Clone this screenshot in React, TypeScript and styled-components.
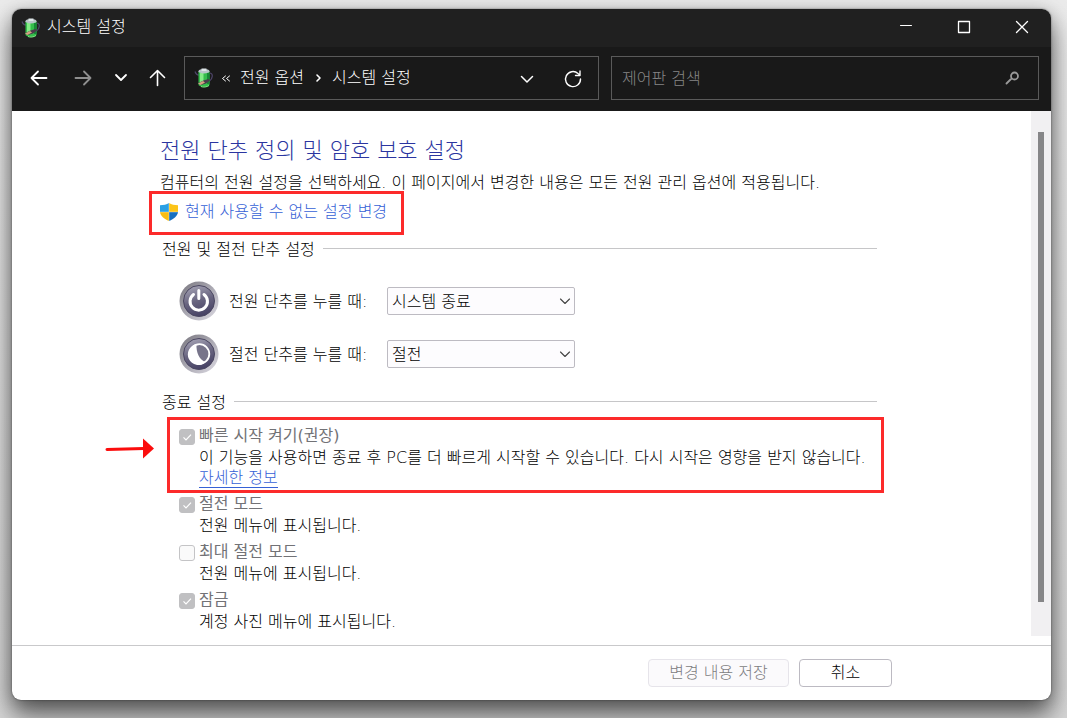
import React from "react";
import styled, { createGlobalStyle } from "styled-components";

const GlobalStyle = createGlobalStyle`
  * { box-sizing: border-box; }
  body {
    margin: 0;
    background: #dedede;
    color: #000;
    font: 300 16px/24px "DejaVu Sans", "Noto Sans CJK KR", sans-serif;
  }
  button, input, select { font: inherit; }
`;

const Desktop = styled.div`
  min-height: 100vh;
  padding: 9px 16px 18px 12px;
  display: flex;
  overflow: hidden;
  background: linear-gradient(#ebebeb, #d6d6d6);
`;

const Window = styled.div`
  flex: 1;
  min-width: 0;
  display: flex;
  flex-direction: column;
  background: #fff;
  border-radius: 9px;
  box-shadow: 0 0 2px rgba(0, 0, 0, 0.5), 0 4px 18px rgba(0, 0, 0, 0.28), 0 16px 26px rgba(0, 0, 0, 0.5);
`;

const TitleBar = styled.header`
  height: 38px;
  padding-left: 9px;
  display: flex;
  align-items: center;
  gap: 6px;
  background: #202020;
  color: #fff;
  border-radius: 9px 9px 0 0;
`;

const WindowTitle = styled.span`
  flex: 1;
  line-height: 36px;
  padding-bottom: 2px;
`;

const CaptionButtons = styled.div`
  align-self: flex-start;
  display: flex;
`;

const CaptionButton = styled.button`
  width: 58px;
  height: 36px;
  display: grid;
  place-items: center;
  border: 0;
  padding: 0;
  background: none;
  color: #fff;
`;

const Toolbar = styled.nav`
  height: 64px;
  padding: 0 12px 2px 5px;
  display: flex;
  align-items: center;
  background: #191919;
  color: #fff;
`;

const NavButton = styled.button<{ $width: number }>`
  width: ${(p) => p.$width}px;
  height: 42px;
  display: grid;
  place-items: center;
  border: 0;
  padding: 0;
  background: none;
  color: #fff;
  &:disabled { color: #8f8f8f; }
`;

const AddressBar = styled.div`
  flex: 81 1 0;
  min-width: 0;
  height: 44px;
  margin: 0 12px 0 7px;
  padding: 0 1px 0 9px;
  display: flex;
  align-items: center;
  border: 1px solid #5a5a5a;
`;

const Crumbs = styled.div`
  flex: 1;
  display: flex;
  align-items: center;
  gap: 8px;
  margin-left: 7px;
  white-space: nowrap;
`;

const Crumb = styled.a`
  color: #fff;
  text-decoration: none;
`;

const SearchBox = styled.label`
  flex: 80 1 0;
  min-width: 0;
  height: 44px;
  padding: 0 18px 0 10px;
  display: flex;
  align-items: center;
  border: 1px solid #5a5a5a;
  color: #9a9a9a;
`;

const SearchInput = styled.input`
  flex: 1;
  min-width: 0;
  padding: 2px 0 0;
  border: 0;
  outline: 0;
  background: none;
  color: #fff;
  &::placeholder { color: #868686; opacity: 1; }
`;

const Body = styled.div`
  flex: 1;
  display: flex;
`;

const Main = styled.main`
  flex: 1;
  min-width: 0;
  padding: 25px 154px 12px 148px;
`;

const ScrollTrack = styled.div`
  width: 20px;
  margin-bottom: 9px;
  padding: 21px 7px 34px;
  display: flex;
  background: #f1f0f2;
`;

const ScrollThumb = styled.div`
  flex: 1;
  background: #868688;
`;

const Heading = styled.h1`
  margin: 0;
  font-size: 22px;
  line-height: 30px;
  font-weight: 300;
  color: #2b35a0;
`;

const Intro = styled.p`
  margin: 5px 0;
  white-space: nowrap;
`;

const AdminLink = styled.a`
  position: relative;
  display: inline-flex;
  align-items: center;
  gap: 7px;
  vertical-align: top;
  color: #3661d6;
  text-decoration: none;
`;

const Marker = styled.span<{ $inset: string }>`
  position: absolute;
  inset: ${(p) => p.$inset};
  border: 3px solid #fc2a2a;
  pointer-events: none;
`;

const Pointer = styled.svg`
  position: absolute;
  left: -66px;
  top: 17px;
`;

const SectionTitle = styled.h2<{ $gap: number }>`
  margin: ${(p) => p.$gap}px 0 0 2px;
  display: flex;
  align-items: center;
  gap: 8px;
  font-size: 16px;
  line-height: 24px;
  font-weight: 300;
  &::after {
    content: "";
    flex: 1;
    height: 4px;
    border-top: 1px solid #c6c6c8;
  }
`;

const PowerRows = styled.div`
  margin: 19px 0 0 19px;
  display: grid;
  gap: 13px;
`;

const PowerRow = styled.div`
  display: grid;
  grid-template-columns: 50px 158px 188px;
  height: 40px;
  align-items: center;
`;

const PowerLabel = styled.label`
  padding-top: 2px;
`;

const SelectWrap = styled.div`
  display: grid;
  align-items: center;
  & > * { grid-area: 1 / 1; }
  & > svg { justify-self: end; margin-right: 3px; pointer-events: none; color: #444; }
`;

const Select = styled.select`
  appearance: none;
  width: 100%;
  height: 28px;
  padding: 2px 24px 0 4px;
  border: 1px solid #bdbbc2;
  border-radius: 2px;
  background: #fdfcfe;
  color: #000;
`;

const Options = styled.div`
  margin: 10px 0 0 19px;
  display: grid;
  gap: 4px;
  line-height: 22px;
`;

const Option = styled.div`
  position: relative;
  display: grid;
  grid-template-columns: 16px 1fr;
  column-gap: 4px;
`;

const CheckBox = styled.input`
  appearance: none;
  width: 16px;
  height: 16px;
  margin: 4px 0 0;
  border: 1px solid #c4c4c6;
  border-radius: 3px;
  background: #fafafa;
  &:checked {
    border-color: #c0c0c2;
    background: #c0c0c2
      url("data:image/svg+xml,%3Csvg xmlns='http://www.w3.org/2000/svg' viewBox='0 0 14 14'%3E%3Cpath d='M3.5 7.3 6 9.8l5-5.2' fill='none' stroke='white' stroke-width='1.2'/%3E%3C/svg%3E");
  }
`;

const OptionLabel = styled.label`
  font-weight: 400;
  color: #727276;
`;

const OptionText = styled.p`
  grid-column: 2;
  margin: 0;
  white-space: nowrap;
`;

const MoreLink = styled.a`
  grid-column: 2;
  justify-self: start;
  line-height: 18px;
  margin-bottom: 1px;
  border-bottom: 1px solid #3661d6;
  color: #3661d6;
  text-decoration: none;
`;

const Footer = styled.footer`
  padding: 13px 159px 13px 20px;
  display: flex;
  justify-content: flex-end;
  gap: 10px;
  border-top: 1px solid #c9c9cb;
`;

const ActionButton = styled.button<{ $width: number }>`
  width: ${(p) => p.$width}px;
  height: 28px;
  padding: 0;
  border: 1px solid #bcbac2;
  border-radius: 4px;
  background: #fff;
  color: #000;
  line-height: 24px;
  &:disabled {
    border-color: #e6e4ea;
    background: #fbfafc;
    color: #7d7d81;
  }
`;

const BatteryIcon = () => (
  <svg width="20" height="22" viewBox="0 0 20 22" aria-hidden="true">
    <path d="M1 4.500c1 3 2.500 3.500 4 3.500M16 6c3 .5 3.500 5-1 8.500" fill="none" stroke="#4d4468" strokeWidth="1.200" />
    <path d="M4.500 4.500h11v13c0 3-11 3-11 0z" fill="#35bd4c" />
    <path d="M6 6h3.500v11H6z" fill="#84ec87" />
    <path d="M13 6h2.500v11H13z" fill="#178a36" />
    <ellipse cx="10" cy="4.200" rx="5.500" ry="2.300" fill="#b9c4c8" />
    <path d="M7.500 1.500h5v2.500h-5z" fill="#dfe6e8" />
    <path d="m4.500 16 5-2.500 5-1.500 1.500 1.500-4 3-5 1.500z" fill="#4b3b4c" />
    <path d="m4 16.500 5-2.500 2 1.500-4.500 2.500z" fill="#d2a582" />
    <path d="M7 19.500c2 1 6 .6 8-1" stroke="#7ef483" fill="none" />
  </svg>
);

const ShieldIcon = () => (
  <svg width="18" height="20" viewBox="0 0 18 20" aria-hidden="true">
    <path d="M9 1C6.500 2.700 3.500 3.200 0 3.200V10h9z" fill="#2ba0e4" />
    <path d="M9 1c2.500 1.700 5.500 2.200 9 2.200V10H9z" fill="#fcc419" />
    <path d="M0 10c.5 4 4 7 9 9v-9z" fill="#f8bd13" />
    <path d="M18 10c-.5 4-4 7-9 9v-9z" fill="#176fc0" />
    <path d="M9 1v18M0 10h18" stroke="#fff" strokeWidth=".6" opacity=".6" />
  </svg>
);

const RoundIcon = ({ kind }: { kind: "power" | "sleep" }) => (
  <svg width="40" height="40" viewBox="0 0 40 40" aria-hidden="true">
    <defs>
      <linearGradient id={`ring-${kind}`} x1="0" y1="0" x2="1" y2="1">
        <stop offset="0" stopColor="#77757d" />
        <stop offset=".5" stopColor="#aaa8b2" />
        <stop offset="1" stopColor="#dedce4" />
      </linearGradient>
      <linearGradient id={`face-${kind}`} x1=".3" y1="0" x2=".6" y2="1">
        <stop offset="0" stopColor="#a3a1b3" />
        <stop offset=".5" stopColor="#68647f" />
        <stop offset="1" stopColor="#454063" />
      </linearGradient>
    </defs>
    <circle cx="20" cy="20" r="19.500" fill={`url(#ring-${kind})`} />
    <circle cx="20" cy="20" r="15.500" fill={`url(#face-${kind})`} stroke="#4b4761" />
    {kind === "power" ? (
      <path d="M14.500 13.500a8.700 8.700 0 1 0 10.500 0M19.800 9.500v8" fill="none" stroke="#fff" strokeWidth="3" strokeLinecap="round" />
    ) : (
      <>
        <circle cx="20.500" cy="20" r="9.800" fill="#77748a" stroke="#fff" strokeWidth="1.800" />
        <path d="M17.500 10C17 19 20.500 25.500 26.500 28.300A10.600 10.600 0 1 1 17.500 10z" fill="#fff" />
      </>
    )}
  </svg>
);

type StrokeProps = { d: string; size?: number; width?: number };
const StrokeIcon = ({ d, size = 20, width = 1.8 }: StrokeProps) => (
  <svg width={size} height={size} viewBox={`0 0 ${size} ${size}`} fill="none" stroke="currentColor" strokeWidth={width} strokeLinecap="round" strokeLinejoin="round" aria-hidden="true">
    <path d={d} />
  </svg>
);

const powerRows = [
  { id: "power", kind: "power" as const, label: "전원 단추를 누를 때:", value: "시스템 종료" },
  { id: "sleep", kind: "sleep" as const, label: "절전 단추를 누를 때:", value: "절전" },
];

const menuOptions = [
  { id: "sleep-mode", label: "절전 모드", text: "전원 메뉴에 표시됩니다.", checked: true },
  { id: "hibernate", label: "최대 절전 모드", text: "전원 메뉴에 표시됩니다.", checked: false },
  { id: "lock", label: "잠금", text: "계정 사진 메뉴에 표시됩니다.", checked: true },
];

export default function App() {
  return (
    <>
      <GlobalStyle />
      <Desktop>
        <Window>
          <TitleBar>
            <BatteryIcon />
            <WindowTitle>시스템 설정</WindowTitle>
            <CaptionButtons>
              <CaptionButton aria-label="최소화"><StrokeIcon d="M4.500 8.500h11" width={1} /></CaptionButton>
              <CaptionButton aria-label="최대화"><StrokeIcon d="M4.500 4.500h11v11h-11z" width={1.3} /></CaptionButton>
              <CaptionButton aria-label="닫기"><StrokeIcon d="m4.500 4.500 11 11m0-11-11 11" width={1.3} /></CaptionButton>
            </CaptionButtons>
          </TitleBar>
          <Toolbar>
            <NavButton $width={44} aria-label="뒤로"><StrokeIcon d="M17.500 10h-15m6.500-6.500-6.500 6.500 6.500 6.500" /></NavButton>
            <NavButton $width={44} aria-label="앞으로" disabled><StrokeIcon d="M2.500 10h15m-6.500-6.500 6.500 6.500-6.500 6.500" /></NavButton>
            <NavButton $width={32} aria-label="최근 위치"><StrokeIcon d="m5 7 5 5 5-5" /></NavButton>
            <NavButton $width={40} aria-label="위로"><StrokeIcon d="M10.500 17.500v-15m-7 7 7-7 7 7" width={1.6} /></NavButton>
            <AddressBar>
              <BatteryIcon />
              <Crumbs>
                <StrokeIcon d="M4.500 3 1.500 5.500l3 2.500m4-5-3 2.500 3 2.500" size={11} width={1} />
                <Crumb href="#power">전원 옵션</Crumb>
                <StrokeIcon d="m5 3 3 3-3 3" size={12} width={1.6} />
                <Crumb href="#settings">시스템 설정</Crumb>
              </Crumbs>
              <NavButton $width={44} aria-label="이전 위치"><StrokeIcon d="m4.500 8.500 5.500 5.500 5.500-5.500" width={1.5} /></NavButton>
              <NavButton $width={48} aria-label="새로 고침"><StrokeIcon d="M17.500 11a7.500 7.500 0 1 1-2.500-5.500l2 1.500m0-4v4.500h-4.500" width={1.4} /></NavButton>
            </AddressBar>
            <SearchBox>
              <SearchInput type="search" placeholder="제어판 검색" aria-label="제어판 검색" />
              <StrokeIcon d="M7.500 8.500 2.500 13.500M7 6a3.500 3.500 0 1 0 7 0 3.500 3.500 0 1 0-7 0" size={16} />
            </SearchBox>
          </Toolbar>
          <Body>
            <Main>
              <Heading>전원 단추 정의 및 암호 보호 설정</Heading>
              <Intro>컴퓨터의 전원 설정을 선택하세요. 이 페이지에서 변경한 내용은 모든 전원 관리 옵션에 적용됩니다.</Intro>
              <AdminLink href="#change">
                <ShieldIcon />
                현재 사용할 수 없는 설정 변경
                <Marker $inset="-9px -17px -11px -11px" />
              </AdminLink>
              <SectionTitle $gap={14}>전원 및 절전 단추 설정</SectionTitle>
              <PowerRows>
                {powerRows.map((row) => (
                  <PowerRow key={row.id}>
                    <RoundIcon kind={row.kind} />
                    <PowerLabel htmlFor={row.id}>{row.label}</PowerLabel>
                    <SelectWrap>
                      <Select id={row.id} defaultValue={row.value}>
                        <option>{row.value}</option>
                      </Select>
                      <StrokeIcon d="m2.500 5 4.500 4.500 4.500-4.500" size={14} width={1.1} />
                    </SelectWrap>
                  </PowerRow>
                ))}
              </PowerRows>
              <SectionTitle $gap={17}>종료 설정</SectionTitle>
              <Options>
                <Option>
                  <CheckBox type="checkbox" id="fast" defaultChecked disabled />
                  <OptionLabel htmlFor="fast">빠른 시작 켜기(권장)</OptionLabel>
                  <OptionText>이 기능을 사용하면 종료 후 PC를 더 빠르게 시작할 수 있습니다. 다시 시작은 영향을 받지 않습니다.</OptionText>
                  <MoreLink href="#more">자세한 정보</MoreLink>
                  <Marker $inset="-8px -7px -4px -12px">
                    <Pointer width="52" height="24" viewBox="0 0 52 24" aria-hidden="true">
                      <path d="M3 12.500 40 11.500" stroke="#fb0d0d" strokeWidth="3" strokeLinecap="round" />
                      <path d="M39 1.500 50 11.500 39 21.500z" fill="#fb0d0d" />
                    </Pointer>
                  </Marker>
                </Option>
                {menuOptions.map((o) => (
                  <Option key={o.id}>
                    <CheckBox type="checkbox" id={o.id} defaultChecked={o.checked} disabled />
                    <OptionLabel htmlFor={o.id}>{o.label}</OptionLabel>
                    <OptionText>{o.text}</OptionText>
                  </Option>
                ))}
              </Options>
            </Main>
            <ScrollTrack>
              <ScrollThumb />
            </ScrollTrack>
          </Body>
          <Footer>
            <ActionButton $width={141} disabled>변경 내용 저장</ActionButton>
            <ActionButton $width={93}>취소</ActionButton>
          </Footer>
        </Window>
      </Desktop>
    </>
  );
}
